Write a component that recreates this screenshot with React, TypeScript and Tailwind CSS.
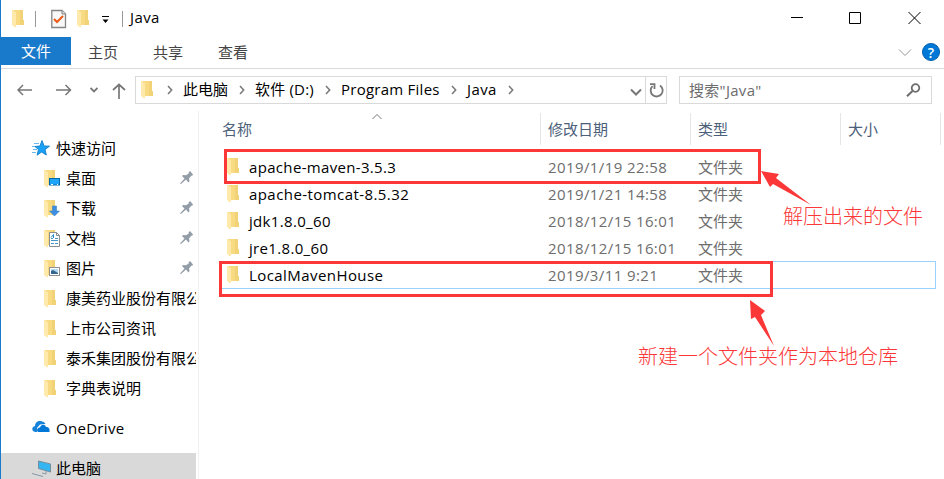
import type { ReactNode } from "react";

const uiFont = "font-['Open_Sans','Noto_Sans_CJK_SC',sans-serif]";

function Folder({ children }: { children?: ReactNode }) {
  return (
    <svg width="18" height="20" viewBox="0 0 18 20" className="shrink-0">
      <path d="M2 1H12V11.500H13V16H4V17Z" fill="#f8da83" />
      <path d="M9 1H12V11H13V16H9Z" fill="#f0cf70" opacity="0.7" />
      <path d="M1 1H2L5 3.500V18L4 18.500L1 16Z" fill="#ffeaab" />
      {children}
    </svg>
  );
}

function DesktopBadge() {
  return (
    <g>
      <rect x="6.500" y="9.500" width="10" height="6.500" fill="#1ea5fa" stroke="#0069a8" />
      <path d="M8 15.500H10M14 15.500H15" stroke="#fff" />
    </g>
  );
}

function DownloadBadge() {
  return <path d="M9.500 7H13.500V12H16.500L11.500 17L6.500 12H9.500Z" fill="#3f8fe0" stroke="#2b76c3" strokeWidth="0.5" />;
}

function DocumentBadge() {
  return (
    <g>
      <path d="M6.500 3.500H13.500L16.500 6.500V17.500H6.500Z" fill="#fff" stroke="#8b8e91" />
      <path d="M13.500 3.500V6.500H16.500" fill="none" stroke="#8b8e91" />
      <path d="M8 9.500H10M12 9.500H15M8 11.500H15M8 14.500H11M12 14.500H15" stroke="#4895c8" />
      <path d="M8 8.500L10.500 5.500V9" stroke="#2888cb" fill="none" />
    </g>
  );
}

function PictureBadge() {
  return (
    <g>
      <rect x="6.500" y="8.500" width="10" height="8" fill="#fff" stroke="#909090" />
      <rect x="8" y="10" width="7" height="5" fill="#b4d9f4" />
      <path d="M8 12L10 11L15 14V15H8Z" fill="#34658a" />
    </g>
  );
}

function Pin() {
  return (
    <svg width="14" height="14" viewBox="0 0 14 14" className="shrink-0">
      <path d="M8.500 1.500L10 0L13 3.500L12 5L11.500 4.500L9 7.500L9.500 10L8.500 11.500L6 8.500L1 13L0 12.500L4.500 7.500L2 5L3 4L6 4.300L9 2.300Z" fill="#929da8" />
    </svg>
  );
}

function Chevron() {
  return (
    <svg width="6" height="10" viewBox="0 0 6 10" className="shrink-0">
      <path d="M1 1L4.700 5L1 9" fill="none" stroke="#777" strokeWidth="1.500" />
    </svg>
  );
}

function TitleBar() {
  return (
    <header className="flex h-[37px] items-center pl-[10px] text-[15px] text-black">
      <Folder />
      <div className="ml-[6px] h-4 w-px bg-[#999]" />
      <svg width="16" height="20" viewBox="0 0 16 20" className="ml-[15px]">
        <path d="M.8 1.500H11L14.500 5V18.500H.8Z" fill="#f8f8f8" stroke="#858585" strokeWidth="1.300" />
        <path d="M11 1.500V5H14.500" fill="#ddd" stroke="#858585" />
        <path d="M3 10L6 13L12 7" fill="none" stroke="#ee5a17" strokeWidth="2" />
      </svg>
      <div className="mt-px ml-[9px] h-5"><Folder /></div>
      <svg width="8" height="8" viewBox="0 0 8 8" className="mt-[3px] ml-[8px]">
        <path d="M0 .5H7" stroke="#000" />
        <path d="M.5 3.500H6.500L3.500 7Z" fill="#000" />
      </svg>
      <div className="ml-[12px] h-4 w-px bg-[#999]" />
      <span className="mb-[2px] ml-[7px] tracking-[0.400px]">Java</span>
      <div className="mb-px ml-auto flex items-center pr-[23px]">
        <svg width="12" height="12" viewBox="0 0 12 12"><path d="M0 5.500H12" stroke="#000" /></svg>
        <svg width="12" height="12" viewBox="0 0 12 12" className="ml-[46px]"><path d="M.5 .5H11.500V11.500H.5Z" fill="none" stroke="#000" /></svg>
        <svg width="13" height="12" viewBox="0 0 13 12" className="ml-[47px]"><path d="M.5 0L12.500 12M12.500 0L.5 12" stroke="#000" /></svg>
      </div>
    </header>
  );
}

function Ribbon() {
  return (
    <nav className="flex h-[32px] items-start border-b border-[#dadbdc] text-[15px] text-[#444]">
      <div className="flex h-[28px] w-[70px] items-center justify-center bg-[#1979ca] text-white">文件</div>
      <div className="ml-[17px] flex h-[30px] items-center gap-[35px]">
        <span>主页</span><span>共享</span><span>查看</span>
      </div>
      <div className="ml-auto flex h-[30px] items-center gap-[10px] pr-[4px]">
        <svg width="14" height="9" viewBox="0 0 14 9"><path d="M1 1.500L7 7.500L13 1.500" fill="none" stroke="#999" /></svg>
        <div className="flex size-[18px] items-center justify-center rounded-full border border-[#005fae] bg-[#0078d7] text-[14px] font-semibold text-white">?</div>
      </div>
    </nav>
  );
}

function AddressBar() {
  return (
    <div className="flex h-[42px] items-center pl-[16px] text-[15px]">
      <svg width="16" height="12" viewBox="0 0 16 12"><path d="M15 6H1M6 1L1 6L6 11" fill="none" stroke="#777" strokeWidth="1.500" /></svg>
      <svg width="16" height="12" viewBox="0 0 16 12" className="ml-[23px]"><path d="M0 6H14M9.500 1L14.500 6L9.500 11" fill="none" stroke="#777" strokeWidth="1.500" /></svg>
      <svg width="8" height="6" viewBox="0 0 8 6" className="ml-[18px]"><path d="M.5 1L4 4.500L7.500 1" fill="none" stroke="#777" strokeWidth="1.800" /></svg>
      <svg width="14" height="16" viewBox="0 0 14 16" className="mt-[2px] ml-[14px]"><path d="M7 16V1.500M1 7L7 1.500L13 7" fill="none" stroke="#777" strokeWidth="1.700" /></svg>
      <div className="ml-[9px] flex h-[28px] w-[532px] items-center border border-[#d9d9d9] pl-[4px] text-black">
        <div className="h-5 w-[18px]"><Folder /></div>
        <div className="ml-[9px]"><Chevron /></div>
        <span className="mb-[2px] ml-[10px] w-[47px] whitespace-nowrap">此电脑</span>
        <div className="ml-[9px]"><Chevron /></div>
        <span className="mb-[2px] ml-[10px] w-[61px] whitespace-nowrap tracking-[0.200px]">软件 (D:)</span>
        <div className="ml-[9px]"><Chevron /></div>
        <span className="mb-[2px] ml-[10px] w-[100px] whitespace-nowrap tracking-[0.250px]">Program Files</span>
        <div className="ml-[10px]"><Chevron /></div>
        <span className="mb-[2px] ml-[10px] w-[31px] whitespace-nowrap tracking-[0.400px]">Java</span>
        <div className="ml-[10px]"><Chevron /></div>
        <svg width="12" height="8" viewBox="0 0 12 8" className="mt-[3px] ml-auto"><path d="M1 1.500L6 6.500L11 1.500" fill="none" stroke="#777" strokeWidth="2" /></svg>
        <div className="ml-[3px] flex h-full w-[21px] items-center justify-center border-l border-[#d9d9d9]">
          <svg width="15" height="15" viewBox="0 0 15 15" className="mt-px"><path d="M11 2.500A6 6 0 1 1 3.500 3.200M1 1.200H5.500V6" fill="none" stroke="#777" strokeWidth="1.800" /></svg>
        </div>
      </div>
      <div className="ml-[12px] flex h-[28px] w-[253px] items-center justify-between border border-[#d9d9d9] pr-[10px] pl-[9px] text-[#6d6d6d]">
        <span className="tracking-[0.300px]">搜索"Java"</span>
        <svg width="15" height="14" viewBox="0 0 15 14"><circle cx="9.500" cy="5" r="3.800" fill="none" stroke="#6d6d6d" strokeWidth="1.800" /><path d="M6.500 8L1 13.300" stroke="#6d6d6d" strokeWidth="2" /></svg>
      </div>
    </div>
  );
}

const shortcuts = [
  { name: "桌面", badge: <DesktopBadge />, pinned: true },
  { name: "下载", badge: <DownloadBadge />, pinned: true },
  { name: "文档", badge: <DocumentBadge />, pinned: true },
  { name: "图片", badge: <PictureBadge />, pinned: true },
  { name: "康美药业股份有限公" },
  { name: "上市公司资讯" },
  { name: "泰禾集团股份有限公" },
  { name: "字典表说明" },
];

function Sidebar() {
  return (
    <aside className="w-[198px] shrink-0 border-r border-[#f0f0f0] pt-[22px] pr-[2px] text-[15px] text-black">
      <div className="flex h-[30px] items-center pl-[31px]">
        <svg width="18" height="16" viewBox="0 0 18 16">
          <path d="M10 .5L12 6L17.500 6.200L13 9.500L14.300 15L9.600 12L5 15.200L6.500 9.600L3 6.500L8 6Z" fill="#1ba1f5" stroke="#1684cf" />
          <path d="M2 3.500H7M0 6.500H3M1 9.500H5M0 12.500H4" stroke="#69b9ee" />
        </svg>
        <span className="ml-[6px]">快速访问</span>
      </div>
      {shortcuts.map((item) => (
        <div key={item.name} className="flex h-[30px] items-center overflow-hidden pl-[42px]">
          <div className="mt-px h-5 shrink-0"><Folder>{item.badge}</Folder></div>
          <span className="ml-[5px] whitespace-nowrap">{item.name}</span>
          {item.pinned && <div className="mr-[2px] ml-auto"><Pin /></div>}
        </div>
      ))}
      <div className="mt-[10px] flex h-[30px] items-center pl-[31px]">
        <svg width="18" height="13" viewBox="0 0 18 13" className="mb-[3px]">
          <path d="M1 11C-.5 9 .5 6.500 3 6C3 2 7 0 10 1.500C12 1.500 13 3 13.500 4L8 4.500L5 8L5 12H3Z" fill="#1683d8" />
          <path d="M6 12C4 10 5.500 7.500 8 7.500C9 4 13 4 14 7C17 7 18 9 17.500 12Z" fill="#0078d7" />
        </svg>
        <span className="ml-[6px] tracking-[0.300px]">OneDrive</span>
      </div>
      <div className="mt-[10px] flex h-[30px] items-center bg-[#d9d9d9] pl-[30px]">
        <svg width="20" height="17" viewBox="0 0 20 17">
          <path d="M7.500 1L19.500 4V12L7.500 8.500Z" fill="#35b5f2" stroke="#728e9e" />
          <path d="M15 11V14L11 13M1 13.500L12 16.500" stroke="#8798a3" fill="none" />
        </svg>
        <span className="ml-[5px]">此电脑</span>
      </div>
    </aside>
  );
}

const files = [
  { name: "apache-maven-3.5.3", date: "2019/1/19 22:58", tracking: "tracking-[0.330px]" },
  { name: "apache-tomcat-8.5.32", date: "2019/1/21 14:58", tracking: "tracking-[0.430px]" },
  { name: "jdk1.8.0_60", date: "2018/12/15 16:01", tracking: "tracking-[0.330px]" },
  { name: "jre1.8.0_60", date: "2018/12/15 16:01", tracking: "tracking-[0.330px]" },
  { name: "LocalMavenHouse", date: "2019/3/11 9:21", tracking: "tracking-[0.430px]" },
];

function FileList() {
  return (
    <main className="min-w-0 flex-1 text-[15px]">
      <div className="mt-[2px] flex h-[32px] text-[#4c607a]">
        <div className="relative flex w-[342px] items-center border-r border-[#e5e5e5] pl-[23px]">
          名称
          <svg width="10" height="6" viewBox="0 0 10 6" className="absolute top-[1px] left-[173px]"><path d="M.5 5L5 .5L9.500 5" fill="none" stroke="#777" /></svg>
        </div>
        <div className="flex w-[150px] items-center border-r border-[#e5e5e5] pl-[7px]">修改日期</div>
        <div className="flex w-[150px] items-center border-r border-[#e5e5e5] pl-[7px]">类型</div>
        <div className="flex w-[100px] items-center border-r border-[#e5e5e5] pl-[7px]">大小</div>
      </div>
      <div className="mt-[9px] ml-[22px] w-[715px]">
        {files.map((file, i) => (
          <div key={file.name} className={i === 4 ? "-mt-px flex h-[28px] items-center border border-[#99d1ff] pl-[4px]" : "flex h-[27px] items-center pl-[5px]"}>
            <div className="-mt-px h-5"><Folder /></div>
            <span className={`ml-[5px] w-[299px] whitespace-nowrap text-black ${file.tracking}`}>{file.name}</span>
            <span className="w-[150px] whitespace-nowrap tracking-[0.400px] text-[#6d6d6d]">{file.date}</span>
            <span className="text-[#6d6d6d]">文件夹</span>
          </div>
        ))}
      </div>
    </main>
  );
}

function Annotations() {
  return (
    <div className="pointer-events-none absolute inset-y-0 -left-px w-[944px] font-['Noto_Sans_CJK_SC',sans-serif] text-[20px] font-light text-[#fb3737]">
      <div className="absolute top-[149px] left-[224px] h-[35px] w-[537px] border-[3px]" />
      <div className="absolute top-[261px] left-[219px] h-[36px] w-[554px] border-[3px]" />
      <svg width="944" height="479" className="absolute inset-0" fill="#fb3737">
        <path d="M761 171L779 174L776 178L811 205L773 184L770 187Z" />
        <path d="M750 300L765 311L761 315L774 346L755 317L751 319Z" />
      </svg>
      <span className="absolute top-[201px] left-[783px] leading-[30px] whitespace-nowrap">解压出来的文件</span>
      <span className="absolute top-[341px] left-[638px] leading-[30px] whitespace-nowrap">新建一个文件夹作为本地仓库</span>
    </div>
  );
}

export default function App() {
  return (
    <div className={`relative flex h-[479px] w-[944px] flex-col overflow-hidden border-l border-[#1979ca] bg-white ${uiFont}`}>
      <TitleBar />
      <Ribbon />
      <AddressBar />
      <div className="flex min-h-0 flex-1">
        <Sidebar />
        <FileList />
      </div>
      <Annotations />
    </div>
  );
}
